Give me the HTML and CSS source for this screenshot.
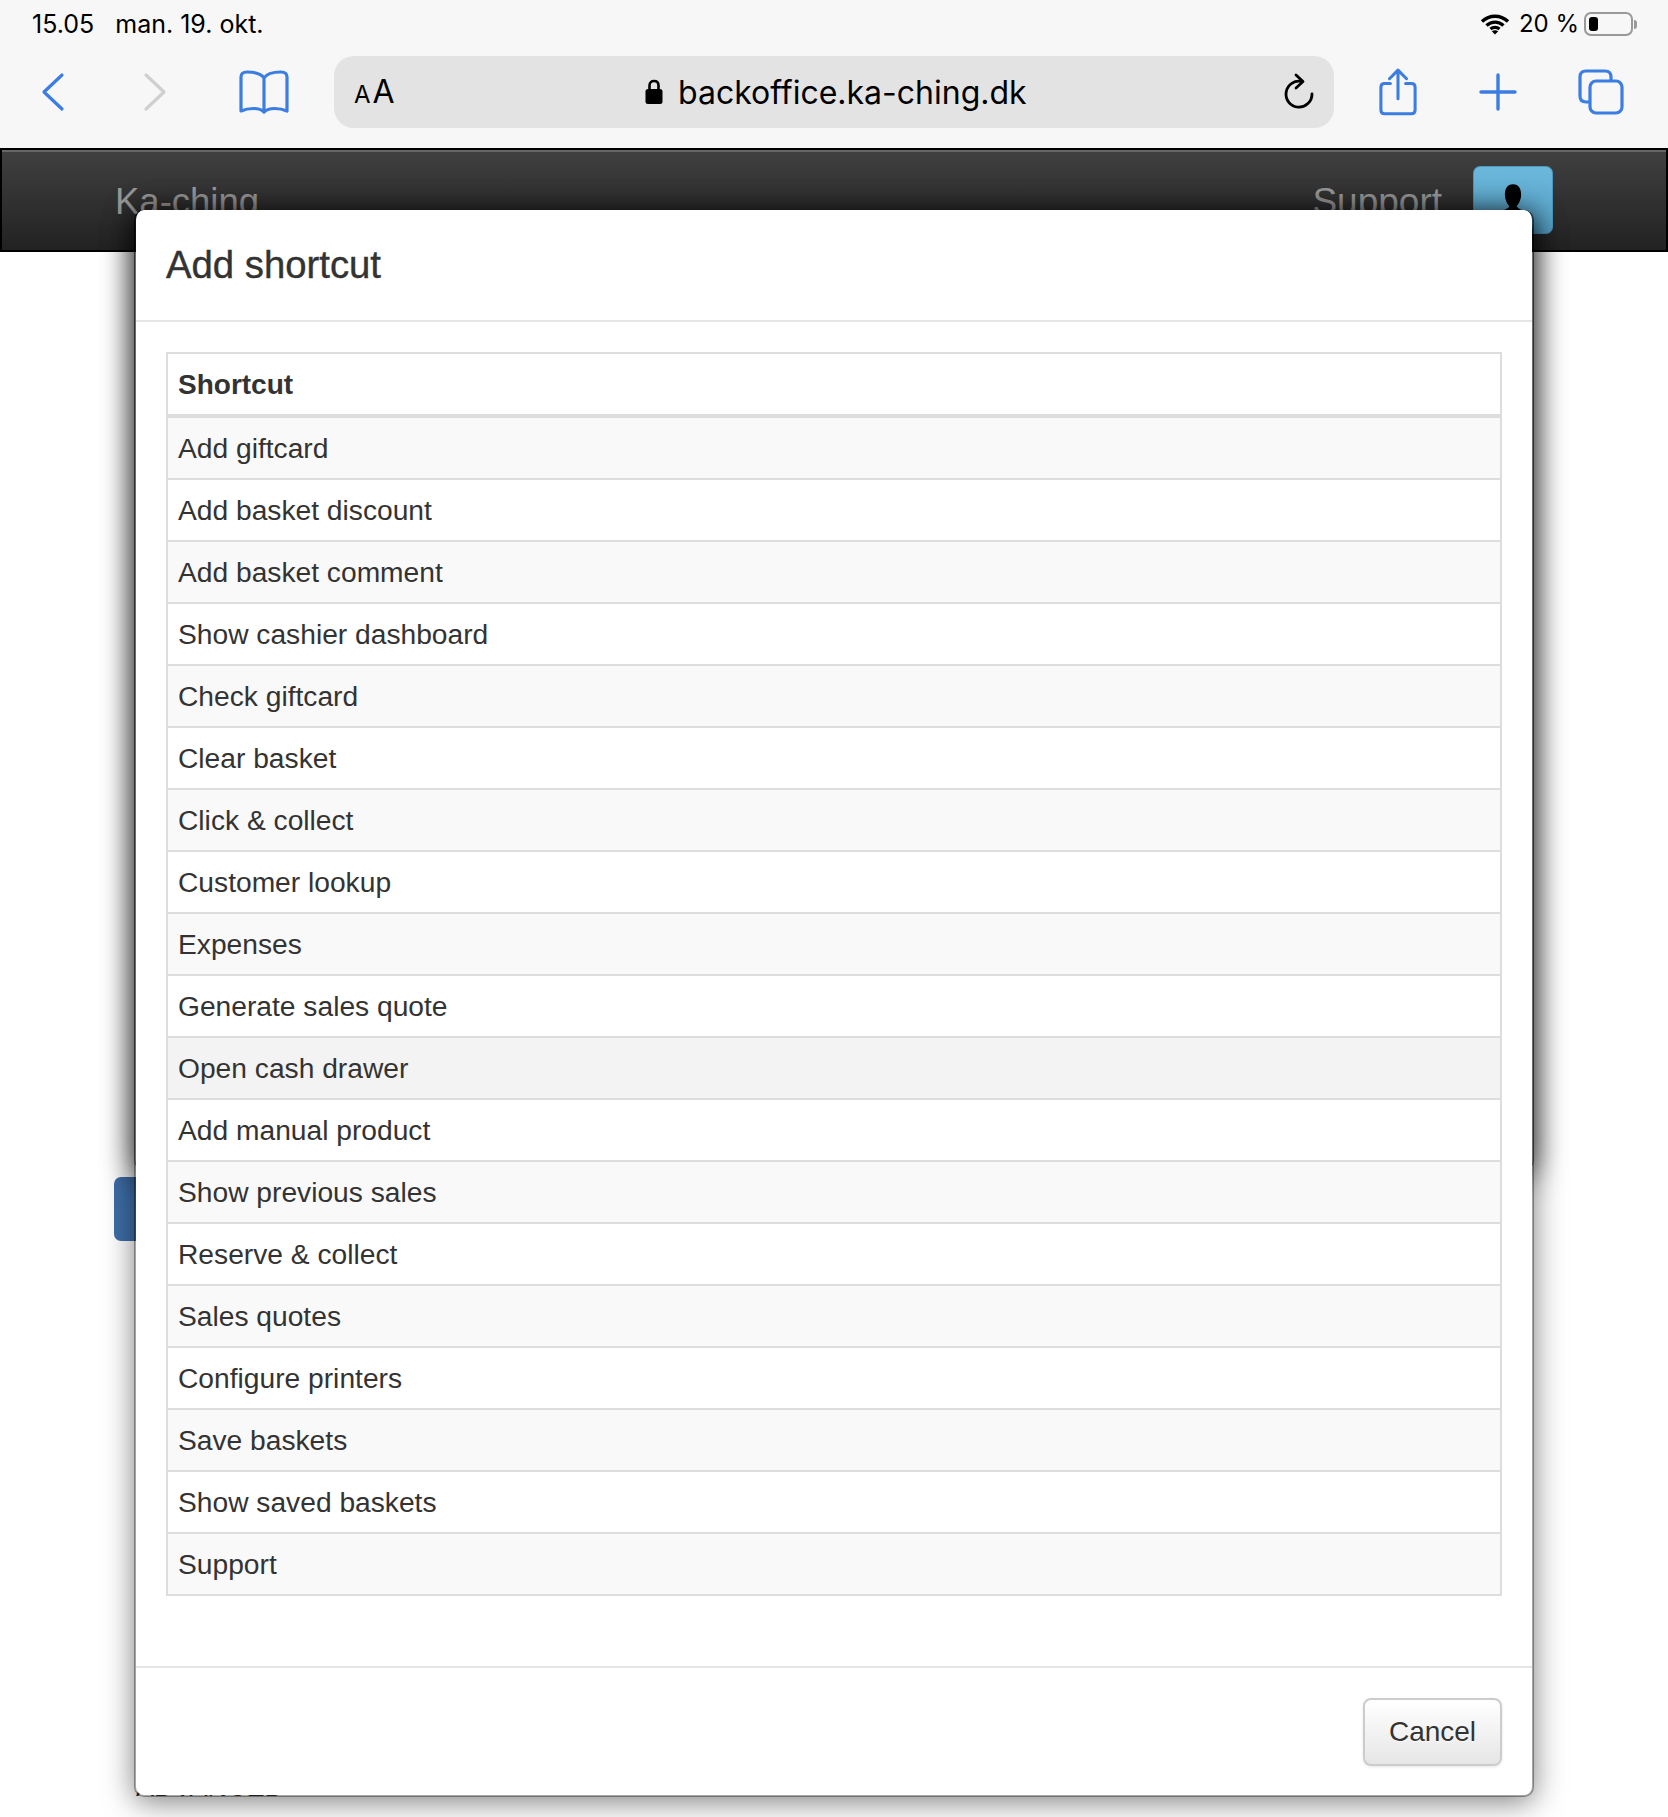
FILE: index.html
```html
<!DOCTYPE html>
<html lang="en">
<head>
    <meta charset="UTF-8">
    <title>Add shortcut</title>
    <link rel="stylesheet" href="styles.css">
</head>
<body>
<div id="browser">
    <div class="status-bar">
        <span class="clock">15.05</span>
        <span class="date">man. 19. okt.</span>
        <span class="status-right">
            <svg class="wifi" width="30" height="22" viewBox="0 0 30 22">
                <path d="M2 8.500C9.500 1.500 20.500 1.500 28 8.500M6.500 12.500C11.500 8 18.500 8 23.500 12.500M10.500 16C13 14 17 14 19.500 16" fill="none" stroke="#000" stroke-width="3.400"/>
                <path d="M15 21.500L11.800 18.200C13.800 16.800 16.200 16.800 18.200 18.200Z" fill="#000"/>
            </svg>
            <span class="battery-text">20 %</span>
            <span class="battery"><span class="battery-level"></span></span>
            <span class="battery-tip"></span>
        </span>
    </div>
    <div class="tool-bar">
        <div class="tool-left">
            <svg class="icon" width="26" height="40" viewBox="0 0 26 40">
                <path d="M22 3L4 20L22 37" fill="none" stroke="#3b7de0" stroke-width="3.200" stroke-linecap="round" stroke-linejoin="round"/>
            </svg>
            <svg class="icon forward" width="26" height="40" viewBox="0 0 26 40">
                <path d="M4 3L22 20L4 37" fill="none" stroke="#cfcfcf" stroke-width="3.200" stroke-linecap="round" stroke-linejoin="round"/>
            </svg>
            <svg class="icon book" width="50" height="44" viewBox="0 0 50 44">
                <path d="M25 8C22 3 15 2 8 2C4 2 2 4 2 7V41C9 38 20 37 25 42C30 37 41 38 48 41V7C48 4 46 2 42 2C35 2 28 3 25 8ZM25 8V42" fill="none" stroke="#3b7de0" stroke-width="3.200" stroke-linejoin="round"/>
            </svg>
        </div>
        <div class="url-bar">
            <span class="aa"><span class="aa-small">A</span>A</span>
            <span class="url">
                <svg class="lock" width="18" height="28" viewBox="0 0 18 28">
                    <path d="M4.500 12V7.500C4.500 4.500 6.500 3 9 3C11.500 3 13.500 4.500 13.500 7.500V12" fill="none" stroke="#000" stroke-width="2.600"/>
                    <rect x="0.500" y="11" width="17" height="15" rx="2.500" fill="#000"/>
                </svg>
                backoffice.ka-ching.dk
            </span>
            <svg class="reload" width="32" height="38" viewBox="0 0 32 38">
                <path d="M19 8.500A13 13 0 1 0 29 21" fill="none" stroke="#000" stroke-width="2.800" stroke-linecap="round"/>
                <path d="M13 2L20 8.500L13 15" fill="none" stroke="#000" stroke-width="2.800" stroke-linecap="round" stroke-linejoin="round"/>
            </svg>
        </div>
        <div class="tool-right">
            <svg class="icon" width="38" height="48" viewBox="0 0 40 50">
                <path d="M12 16H6C3.500 16 2 17.500 2 20V44C2 46.500 3.500 48 6 48H34C36.500 48 38 46.500 38 44V20C38 17.500 36.500 16 34 16H28M20 32V3M11 11L20 2L29 11" fill="none" stroke="#3b7de0" stroke-width="3.200" stroke-linecap="round" stroke-linejoin="round"/>
            </svg>
            <svg class="icon" width="38" height="38" viewBox="0 0 38 38">
                <path d="M19 2V36M2 19H36" fill="none" stroke="#3b7de0" stroke-width="3.400" stroke-linecap="round"/>
            </svg>
            <svg class="icon" width="46" height="46" viewBox="0 0 46 46">
                <path d="M33 11V8C33 4 31 2 27 2H8C4 2 2 4 2 8V27C2 31 4 33 8 33H11" fill="none" stroke="#3b7de0" stroke-width="3.200"/>
                <rect x="12" y="12" width="32" height="32" rx="6" fill="none" stroke="#3b7de0" stroke-width="3.200"/>
            </svg>
        </div>
    </div>
</div>

<div id="navbar">
    <span class="brand">Ka-ching</span>
    <div class="nav-right">
        <span class="nav-link">Support</span>
        <div class="user-btn">
            <svg width="40" height="58" viewBox="0 0 34 50">
                <path d="M17 2C22 2 24 6 24 11C24 15 22 19 20 21C22 24 28 25 31 28C33 30 34 36 34 50H0C0 36 1 30 3 28C6 25 12 24 14 21C12 19 10 15 10 11C10 6 12 2 17 2Z" fill="#000"/>
            </svg>
        </div>
    </div>
</div>

<div id="page">
    <div class="blue-btn"></div>
    <div class="section-title">ADVANCED</div>
</div>

<!-- modal behind -->
<div class="modal modal-back"></div>

<div class="modal">
    <div class="modal-header">Add shortcut</div>
    <div class="modal-body">
        <div class="grid">
            <div class="grid-head">Shortcut</div>
            <div class="grid-row">Add giftcard</div>
            <div class="grid-row">Add basket discount</div>
            <div class="grid-row">Add basket comment</div>
            <div class="grid-row">Show cashier dashboard</div>
            <div class="grid-row">Check giftcard</div>
            <div class="grid-row">Clear basket</div>
            <div class="grid-row">Click &amp; collect</div>
            <div class="grid-row">Customer lookup</div>
            <div class="grid-row">Expenses</div>
            <div class="grid-row">Generate sales quote</div>
            <div class="grid-row hover">Open cash drawer</div>
            <div class="grid-row">Add manual product</div>
            <div class="grid-row">Show previous sales</div>
            <div class="grid-row">Reserve &amp; collect</div>
            <div class="grid-row">Sales quotes</div>
            <div class="grid-row">Configure printers</div>
            <div class="grid-row">Save baskets</div>
            <div class="grid-row">Show saved baskets</div>
            <div class="grid-row">Support</div>
        </div>
    </div>
    <div class="modal-footer">
        <button class="btn">Cancel</button>
    </div>
</div>
</body>
</html>
```
FILE: styles.css
```css
* {
    box-sizing: border-box;
}

html, body {
    margin: 0;
    height: 100%;
}

body {
    position: relative;
    overflow: hidden;
    background: #fff;
    font-family: "Liberation Sans", Arial, sans-serif;
    color: #333;
}

#browser {
    height: 148px;
    background: #f7f7f7;
    color: #000;
    font-family: Inter, "Liberation Sans", sans-serif;
}

.status-bar {
    height: 56px;
    padding: 9px 31px 0 32px;
    display: flex;
    align-items: flex-start;
    font-size: 25px;
    line-height: 30px;
}

.date {
    margin-left: 21px;
}

.status-right {
    margin-left: auto;
    display: flex;
    align-items: center;
    font-size: 24px;
}

.wifi {
    margin-right: 9px;
}

.battery-text {
    margin-right: 5px;
}

.battery {
    width: 49px;
    height: 24px;
    padding: 3px;
    border: 2px solid #999;
    border-radius: 7px;
}

.battery-level {
    display: block;
    width: 9px;
    height: 100%;
    background: #000;
    border-radius: 3px;
}

.battery-tip {
    width: 3px;
    height: 9px;
    margin-left: 1px;
    background: #999;
    border-radius: 0 3px 3px 0;
}

.tool-bar {
    display: flex;
    align-items: center;
    height: 72px;
}

.tool-left {
    width: 334px;
    padding-left: 40px;
    display: flex;
    align-items: center;
}

.forward {
    margin-left: 76px;
}

.book {
    margin-left: 71px;
}

.url-bar {
    width: 1000px;
    height: 72px;
    padding: 0 19px 0 20px;
    background: #e3e3e3;
    border-radius: 20px;
    display: flex;
    align-items: center;
}

.aa {
    font-size: 32px;
    line-height: 1;
    width: 291px;
}

.aa-small {
    font-size: 24px;
    margin-right: 2px;
}

.url {
    flex: 1;
    font-size: 32px;
    white-space: nowrap;
    display: flex;
    align-items: center;
    gap: 15px;
}

.tool-right {
    flex: 1;
    padding: 0 44px 0 45px;
    display: flex;
    align-items: center;
    justify-content: space-between;
}

#navbar {
    height: 104px;
    padding: 16px 113px 0;
    display: flex;
    justify-content: space-between;
    background: linear-gradient(#404040, #222);
    border: 2px solid #000;
    box-shadow: inset 0 2px 0 #666;
    color: #999;
    font-size: 36.500px;
}

.brand {
    padding-top: 15px;
}

.nav-right {
    display: flex;
    gap: 31px;
}

.nav-link {
    padding-top: 15px;
    font-size: 37px;
}

.user-btn {
    width: 80px;
    height: 68px;
    padding-top: 15px;
    background: linear-gradient(#6cb8db, #56a3c9);
    border: 1px solid #4b97be;
    border-radius: 7px;
    text-align: center;
}

#page {
    position: relative;
    height: 1565px;
}

.blue-btn {
    position: absolute;
    left: 114px;
    top: 925px;
    width: 40px;
    height: 64px;
    background: #3e6ea8;
    border-radius: 7px;
}

.section-title {
    position: absolute;
    left: 136px;
    top: 1520px;
    font-size: 27px;
    color: #333;
}

.modal {
    position: absolute;
    left: 134px;
    top: 210px;
    width: 1400px;
    height: 1587px;
    background: #fff;
    background-clip: padding-box;
    border-radius: 10px;
    border: solid rgba(0, 0, 0, 0.35);
    border-width: 0 2px 2px;
    box-shadow: 0 5px 30px rgba(0, 0, 0, 0.5);
    display: flex;
    flex-direction: column;
}

.modal-back {
    height: 960px;
    box-shadow: 0 5px 30px rgba(0, 0, 0, 0.75);
}

.modal-header {
    height: 112px;
    padding: 0 30px;
    font-size: 38.300px;
    line-height: 110px;
    -webkit-text-stroke: 0.4px #333;
    border-bottom: 2px solid #e5e5e5;
}

.modal-body {
    flex: 1;
    padding: 30px 30px 0;
}

.grid {
    border: 2px solid #ddd;
    border-bottom-width: 0;
}

.grid-head {
    height: 64px;
    padding: 0 10px;
    font-size: 28px;
    font-weight: bold;
    line-height: 62px;
    border-bottom: 4px solid #ddd;
}

.grid-row {
    height: 62px;
    padding: 0 10px;
    font-size: 28.200px;
    line-height: 60px;
    border-bottom: 2px solid #ddd;
}

.grid-row:nth-child(even) {
    background: #f9f9f9;
}

.grid-row.hover {
    background: #f3f3f3;
}

.modal-footer {
    height: 129px;
    padding: 30px;
    border-top: 2px solid #e5e5e5;
    display: flex;
    justify-content: flex-end;
}

.btn {
    width: 139px;
    height: 68px;
    font-family: inherit;
    font-size: 28px;
    color: #333;
    text-shadow: 0 1px 1px #fff;
    background: linear-gradient(#fff, #e6e6e6);
    border: 2px solid #ccc;
    border-radius: 8px;
    box-shadow: 0 1px 3px rgba(0, 0, 0, 0.1);
}
```
